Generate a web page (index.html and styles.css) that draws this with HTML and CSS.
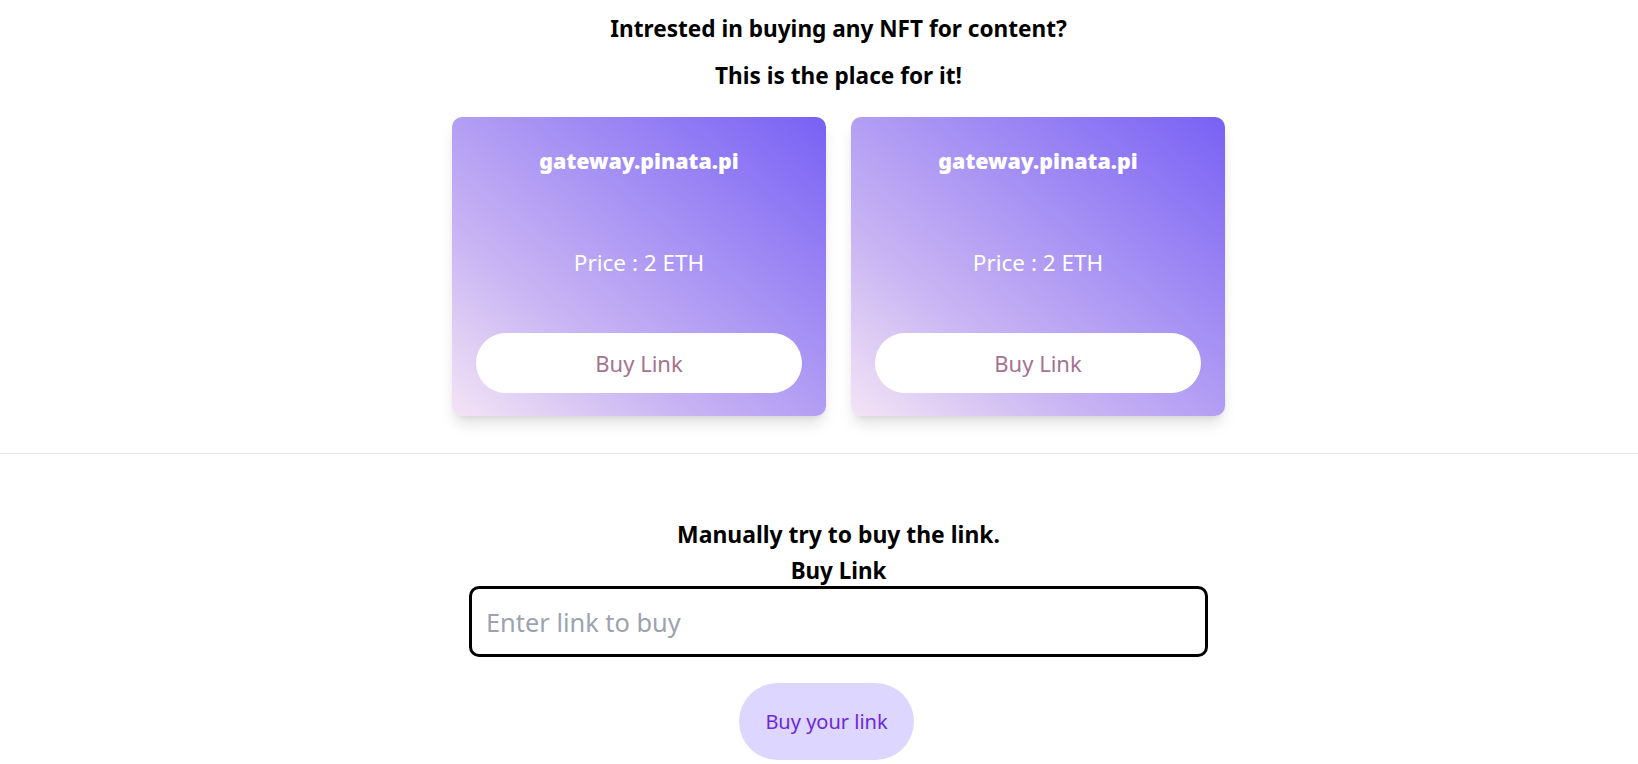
FILE: index.html
```html
<!DOCTYPE html>
<html lang="en">
<head>
<meta charset="utf-8">
<title>NFT Links</title>
<link rel="stylesheet" href="styles.css">
</head>
<body>
<main class="page">
  <section class="hero">
    <h1 class="heading heading-first">Intrested in buying any NFT for content?</h1>
    <h2 class="heading heading-second">This is the place for it!</h2>
    <div class="cards">
      <article class="card">
        <h3 class="card-title">gateway.pinata.pi</h3>
        <p class="card-price">Price : 2 ETH</p>
        <button class="card-button" type="button">Buy Link</button>
      </article>
      <article class="card">
        <h3 class="card-title">gateway.pinata.pi</h3>
        <p class="card-price">Price : 2 ETH</p>
        <button class="card-button" type="button">Buy Link</button>
      </article>
    </div>
  </section>
  <hr class="divider">
  <section class="manual">
    <h3 class="manual-title">Manually try to buy the link.</h3>
    <label class="manual-label" for="link">Buy Link</label>
    <input class="manual-input" id="link" type="text" placeholder="Enter link to buy">
    <button class="manual-button" type="button">Buy your link</button>
  </section>
</main>
</body>
</html>
```

FILE: styles.css
```css
html, body {
  margin: 0;
  padding: 0;
  background: #ffffff;
}

body {
  font-family: "Noto Sans", "Open Sans", sans-serif;
  color: #000000;
}

.page {
  display: flex;
  flex-direction: column;
}

.hero {
  display: flex;
  flex-direction: column;
  align-items: center;
  padding-left: 39px;
}

.heading {
  margin: 0;
  font-size: 22.6px;
  line-height: 28px;
  font-weight: 700;
  text-align: center;
}

.heading-first {
  margin-top: 15px;
}

.heading-second {
  margin-top: 19px;
}

.cards {
  display: flex;
  gap: 25px;
  margin-top: 27px;
}

.card {
  width: 374px;
  box-sizing: border-box;
  padding: 24px 24px 23px;
  border-radius: 10px;
  background: linear-gradient(to top right, #f4e4f5 0%, #cab6f3 30%, #a792f4 60%, #7861f4 100%);
  box-shadow: 0 10px 15px -3px rgba(0, 0, 0, 0.13), 0 4px 6px -4px rgba(0, 0, 0, 0.1);
  display: flex;
  flex-direction: column;
  align-items: stretch;
}

.card-title {
  margin: 4px 0 0;
  font-size: 21.4px;
  line-height: 32px;
  font-weight: 900;
  color: #ffffff;
  text-align: center;
}

.card-price {
  margin: 70px 0 0;
  font-size: 22.5px;
  line-height: 32px;
  font-weight: 400;
  color: #ffffff;
  text-align: center;
}

.card-button {
  margin-top: 54px;
  height: 60px;
  border: none;
  border-radius: 30px;
  background: #ffffff;
  color: #a5728f;
  font-family: inherit;
  font-size: 22px;
  line-height: 28px;
  cursor: pointer;
}

.divider {
  margin: 37px 0 0;
  border: none;
  border-top: 1px solid #e5e7eb;
  height: 0;
}

.manual {
  display: flex;
  flex-direction: column;
  align-items: center;
  padding-left: 39px;
}

.manual-title {
  margin: 67px 0 0;
  font-size: 22.9px;
  line-height: 28px;
  font-weight: 700;
}

.manual-label {
  margin-top: 8px;
  font-size: 22.4px;
  line-height: 28px;
  font-weight: 700;
}

.manual-input {
  margin-top: 1px;
  width: 739px;
  height: 71px;
  box-sizing: border-box;
  border: 3px solid #000000;
  border-radius: 10px;
  padding: 0 14px;
  font-family: inherit;
  font-size: 25.4px;
  color: #111827;
  outline: none;
}

.manual-input::placeholder {
  color: #9ca3af;
}

.manual-button {
  margin: 26px 24px 0 0;
  padding: 24px 26px;
  border: none;
  border-radius: 9999px;
  background: #ddd6fe;
  color: #6d28d9;
  font-family: inherit;
  font-size: 20px;
  line-height: 29px;
  cursor: pointer;
}
```
